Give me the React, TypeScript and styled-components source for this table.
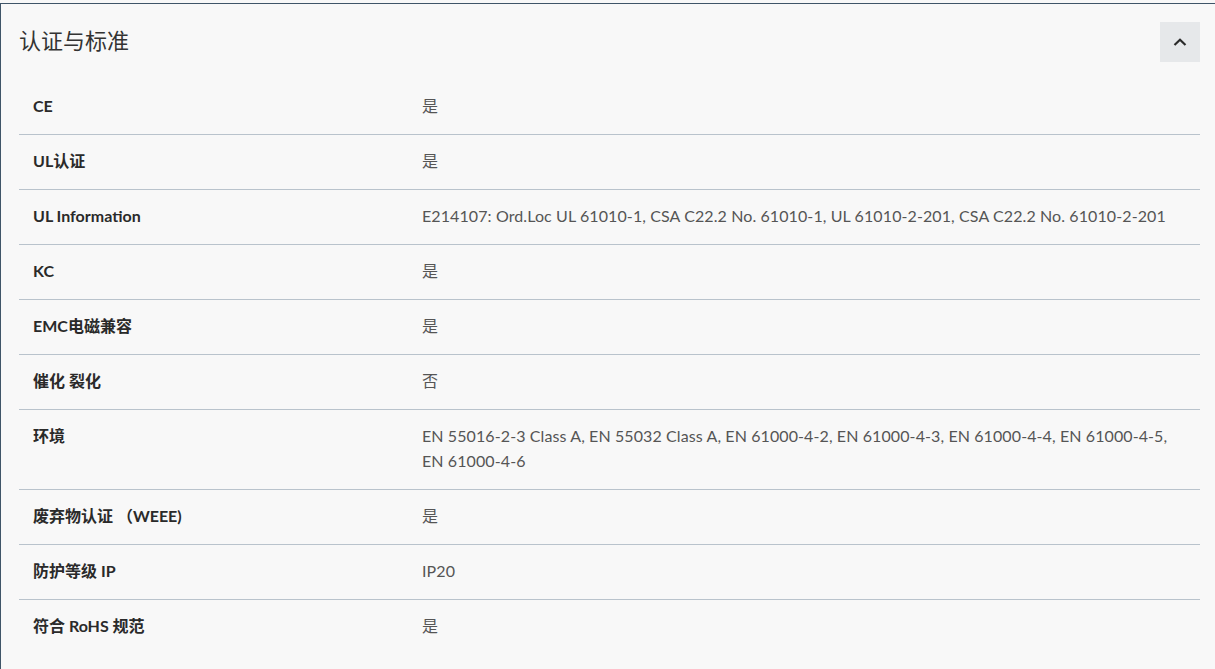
import styled, { createGlobalStyle } from 'styled-components';

type SpecRow = { label: string; value: string };

const rows: SpecRow[] = [
  { label: 'CE', value: '是' },
  { label: 'UL认证', value: '是' },
  {
    label: 'UL Information',
    value:
      'E214107: Ord.Loc UL 61010-1, CSA C22.2 No. 61010-1, UL 61010-2-201, CSA C22.2 No. 61010-2-201',
  },
  { label: 'KC', value: '是' },
  { label: 'EMC电磁兼容', value: '是' },
  { label: '催化 裂化', value: '否' },
  {
    label: '环境',
    value:
      'EN 55016-2-3 Class A, EN 55032 Class A, EN 61000-4-2, EN 61000-4-3, EN 61000-4-4, EN 61000-4-5, EN 61000-4-6',
  },
  { label: '废弃物认证 （WEEE)', value: '是' },
  { label: '防护等级 IP', value: 'IP20' },
  { label: '符合 RoHS 规范', value: '是' },
];

export default function App() {
  return (
    <>
      <GlobalStyle />
      <Panel>
        <Header>
          <Title>认证与标准</Title>
          <ToggleBtn aria-label="收起">
            <svg width="14" height="8" viewBox="0 0 14 8" fill="none">
              <path d="M1.5 7L7 1.8L12.5 7" stroke="#2b2b2b" strokeWidth="2.2" />
            </svg>
          </ToggleBtn>
        </Header>
        <Table>
          {rows.map((r) => (
            <Row key={r.label}>
              <Label>{r.label}</Label>
              <Value>{r.value}</Value>
            </Row>
          ))}
        </Table>
      </Panel>
    </>
  );
}

const GlobalStyle = createGlobalStyle`
  html, body {
    margin: 0;
    background: #f8f8f8;
  }
  body {
    font-family: Lato, "Noto Sans CJK SC", sans-serif;
    padding-top: 3px;
  }
`;

const Panel = styled.section`
  border-top: 1px solid #3f5568;
  border-left: 1px solid #3f5568;
  background: #f8f8f8;
  padding: 0 15px 20px 18px;
  min-height: 665px;
  box-sizing: border-box;
`;

const Header = styled.div`
  display: flex;
  align-items: center;
  justify-content: space-between;
  padding: 18px 0 18px;
`;

const Title = styled.h2`
  margin: 0 0 6px;
  font-size: 22px;
  font-weight: 400;
  color: #333;
  font-family: Lato, "Noto Sans CJK SC", sans-serif;
`;

const ToggleBtn = styled.button`
  width: 40px;
  height: 40px;
  border: none;
  padding: 0;
  background: #e6e8ea;
  display: flex;
  align-items: center;
  justify-content: center;
  cursor: pointer;
`;

const Table = styled.div`
  display: flex;
  flex-direction: column;
`;

const Row = styled.div`
  display: grid;
  grid-template-columns: 389px 1fr;
  padding: 13px 28px 16px 14px;
  border-bottom: 1px solid #b9c3cc;
  line-height: 25px;
  font-size: 16px;

  &:last-child {
    border-bottom: none;
  }
`;

const Label = styled.div`
  font-weight: 700;
  color: #2a2a2a;
`;

const Value = styled.div`
  color: #555;
  letter-spacing: 0.1px;
`;
